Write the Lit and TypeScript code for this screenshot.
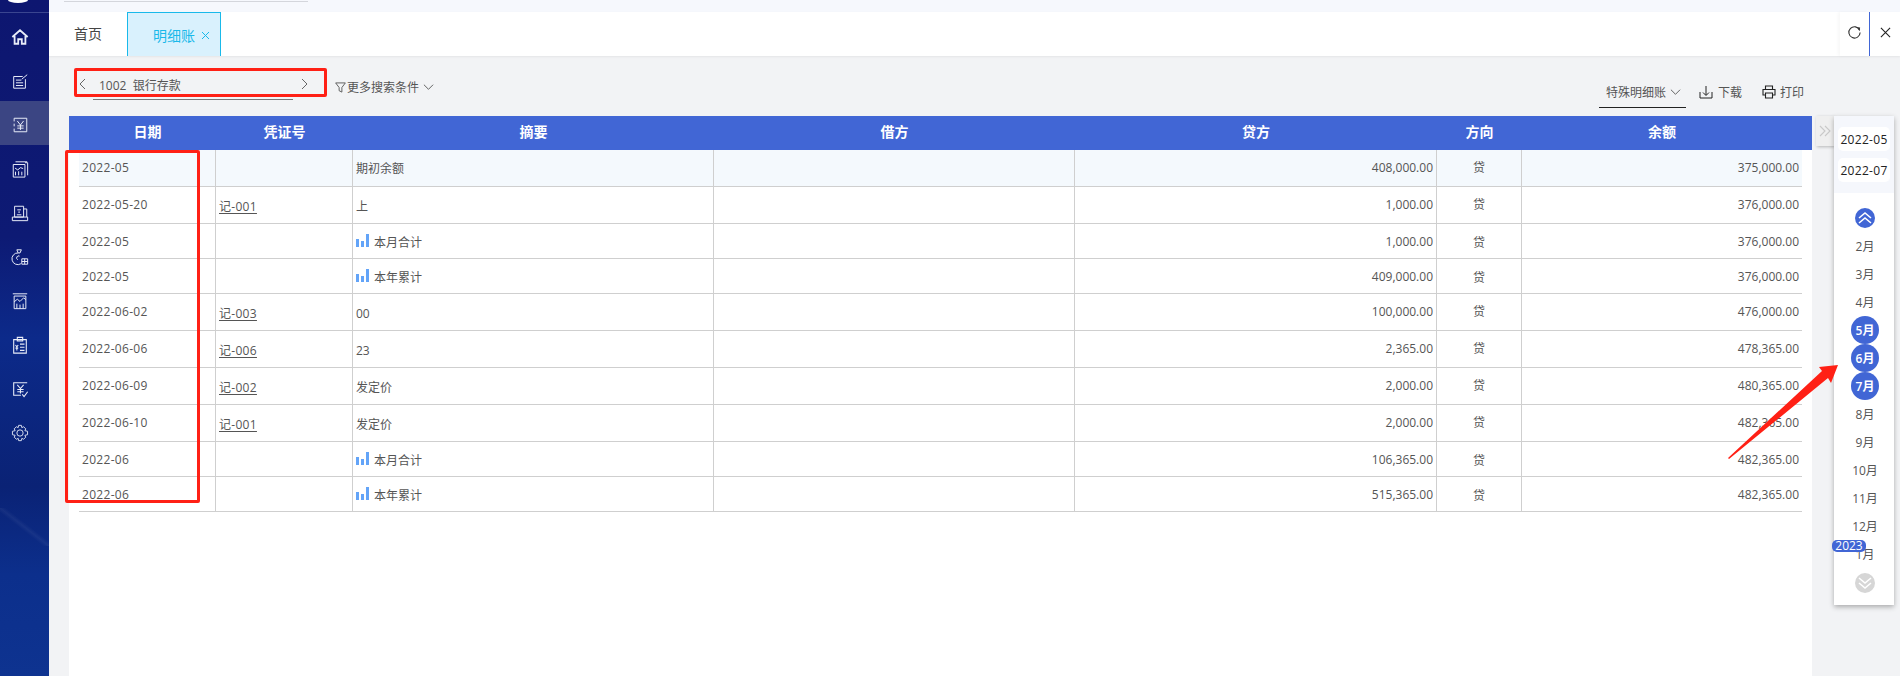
import { LitElement, html, css, svg } from "lit";
import { customElement } from "lit/decorators.js";

type Row = { h: number; d: string; v?: string; s: string; c: string; b: string; chart?: boolean };
const rows: Row[] = [
  { h: 37, d: "2022-05", s: "期初余额", c: "408,000.00", b: "375,000.00" },
  { h: 37, d: "2022-05-20", v: "记-001", s: "上", c: "1,000.00", b: "376,000.00" },
  { h: 35, d: "2022-05", s: "本月合计", chart: true, c: "1,000.00", b: "376,000.00" },
  { h: 35, d: "2022-05", s: "本年累计", chart: true, c: "409,000.00", b: "376,000.00" },
  { h: 37, d: "2022-06-02", v: "记-003", s: "00", c: "100,000.00", b: "476,000.00" },
  { h: 37, d: "2022-06-06", v: "记-006", s: "23", c: "2,365.00", b: "478,365.00" },
  { h: 37, d: "2022-06-09", v: "记-002", s: "发定价", c: "2,000.00", b: "480,365.00" },
  { h: 37, d: "2022-06-10", v: "记-001", s: "发定价", c: "2,000.00", b: "482,365.00" },
  { h: 35, d: "2022-06", s: "本月合计", chart: true, c: "106,365.00", b: "482,365.00" },
  { h: 35, d: "2022-06", s: "本年累计", chart: true, c: "515,365.00", b: "482,365.00" },
];

const icons = [
  svg`<path d="M1.500 10 10 2.500l8.500 7.500M4 9v8.500h4v-5h4v5h4V9" stroke-width="2"/>`,
  svg`<path d="M16 8v10H3V5h10M5.500 9h6M5.500 12h8M5.500 15h8M12 8l6-5" stroke-width="1.100"/>`,
  svg`<path d="M3.500 6V2.500h14v15h-14V14M3.500 8.500v3M7 5.500l3.500 4.500 3.500-4.500M10.500 10v5.500M7 11h7M7 13.500h7" stroke-width="1.100"/>`,
  svg`<path d="M2.500 5h13v14h-13zM15.500 3h3v14M5 2h13M4.500 9l3 2 3-2.500 3 1M5 13v4M8.500 12.500v4.500M12 13v4" stroke-width="1.100"/>`,
  svg`<path d="M4 2.500h10v12H4zM14 5.500h3.500v9M1.500 14.500h17v4h-17zM7 6.500h4M8 9h2M6.500 12h5" stroke-width="1.100"/>`,
  svg`<path d="M6.500 2h5l-1.500 3.500H8zM8 5.500a6.500 6.500 0 1 0 3 12M9.500 9a2 2 0 1 0-2 4M12 12h6.500v6H12zM15.200 12v6M12 15h6.500" stroke-width="1.100"/>`,
  svg`<path d="M2 2h16M3.500 4.500h13v14h-13zM3.500 11l3.500-3 3 2.500 4-4 2.500 2M6.500 13v5.500M10 14v4.500M13.500 13v5.500" stroke-width="1.100"/>`,
  svg`<path d="M3 4h14v15H3zM7 1.500h6V5.500H7zM10 9h5M10 12.500h5M10 16h5M5 10l1.500 2 1.500-2M6.500 12v4M5 13.500h3" stroke-width="1.200"/>`,
  svg`<path d="M18 3H3v14h8M7 5.500l3.500 4 3.500-4M10.500 9.500v5.500M7 10.500h7M7 13h7M12.500 16l2 2.500 4-5.500" stroke-width="1.200"/>`,
  svg`<path d="M8.500 1.500h3l.5 2.500 2-.9 2.400 2.200-1 2.100 3 .7v3.800l-3 .7 1 2.100-2.400 2.200-2-.9-.5 2.500h-3l-.5-2.500-2 .9-2.400-2.200 1-2.100-3-.7V8.100l3-.7-1-2.100L6 3.100l2 .9zM10 6.500a3.500 3.500 0 1 0 0 7 3.500 3.500 0 0 0 0-7z" stroke-width="1"/>`,
];

const dbl = (up: boolean) => html`<svg viewBox="0 0 20 20" width="20" height="20" fill="none" stroke="#fff" stroke-width="1.600">
  ${up ? svg`<path d="M4 10l6-5 6 5M4 15l6-5 6 5"/>` : svg`<path d="M4 5l6 5 6-5M4 10l6 5 6-5"/>`}
</svg>`;

const chev = html`<svg class="chev" viewBox="0 0 12 8" width="11" height="8" fill="none" stroke="#555" stroke-width="1"><path d="M1 1.500l5 5 5-5"/></svg>`;

@customElement("app-root")
export class AppRoot extends LitElement {
  static styles = css`
    :host { display: block; width: 1900px; height: 676px; overflow: hidden; position: relative; font-family: "Open Sans", "Noto Sans CJK SC", sans-serif; font-size: 12px; color: #555; }
    * { box-sizing: border-box; }
    .page { display: flex; height: 676px; }
    .side { width: 49px; flex: none; background-color: #0d1670;
      background-image:
        linear-gradient(to top right, transparent 44%, rgba(255,255,255,.05) 50%, transparent 56%),
        linear-gradient(180deg, #0d1670 0%, #0d1a74 35%, #0c2a8a 50%, #0a2275 72%, #0c2f8c 85%, #0e3390 100%);
      background-size: 49px 38px, 100% 100%;
      background-position: 0 508px, 0 0;
      background-repeat: no-repeat; }
    .logo { height: 13px; border-bottom: 1px solid #3a4590; }
    .logo i { display: block; width: 20px; height: 3px; margin-left: 8px; background: #fff; border-radius: 0 0 10px 10px / 0 0 3px 3px; }
    .nav { display: flex; flex-direction: column; }
    .nav div { height: 44px; display: flex; align-items: center; justify-content: center; padding: 3px 10px 0 0; }
    .nav div.on { background: #3b4583; }
    .nav svg { width: 18px; height: 18px; fill: none; stroke: #e8ecf8; }
    .main { flex: 1; display: flex; flex-direction: column; min-width: 0; background: #f2f3f5; }
    .strip { height: 12px; background: #f6f8fd; flex: none; padding-top: 1px; }
    .strip i { display: block; width: 244px; margin-left: 15px; height: 1px; background: #d4d6dc; }
    .tabs { height: 44px; flex: none; background: #fff; display: flex; box-shadow: 0 1px 2px rgba(0,0,0,.06); position: relative; }
    .tab0 { width: 78px; padding-left: 25px; font-size: 14px; line-height: 44px; color: #444; }
    .tab1 { width: 94px; background: #d9f1fd; border: 1px solid #19b9ea; border-bottom: none; color: #19b9ea; font-size: 14px; padding-left: 25px; display: flex; gap: 6px; align-items: center; }
    .tab1 svg { width: 9px; height: 9px; stroke: #19b9ea; fill: none; margin-top: 2px; }
    .tabs .sp { flex: 1; }
    .tool { width: 30px; display: flex; align-items: center; justify-content: center; padding-bottom: 3px; }
    .tool.sep { border-right: 1px solid #4166d5; box-shadow: -2px 0 3px rgba(0,0,0,.03); }
    .toolbar { height: 60px; flex: none; display: flex; align-items: flex-start; padding-left: 26px; }
    .picker { width: 253px; height: 25px; margin-top: 15px; display: flex; align-items: center; justify-content: space-between; position: relative; padding: 0 19px 0 3px; color: #555; }
    .picker b { font-weight: 400; position: absolute; left: 24px; top: 5px; white-space: pre; }
    .picker::after { content: ""; position: absolute; left: 18px; top: 28px; width: 200px; height: 1px; background: #777; }
    .more { margin-left: 7px; margin-top: 22px; display: flex; align-items: center; font-size: 12px; color: #555; }
    .more .chev { margin-left: 4px; }
    .more svg:first-child { margin-right: 1px; }
    .grow { flex: 1; }
    .right { display: flex; margin-right: 96px; align-items: flex-start; padding-top: 12px; color: #555; }
    .special { width: 87px; height: 40px; border-bottom: 1px solid #222; display: flex; align-items: center; justify-content: center; gap: 4px; padding: 8px 0 0 2px; }
    .act { display: flex; align-items: center; gap: 5px; margin: 7px 0 0 13px; height: 34px; }
    .act.print { margin-left: 20px; gap: 4px; }
    .body { flex: 1; display: flex; min-height: 0; }
    .sheet { width: 1743px; margin-left: 20px; background: #fff; flex: none; }
    .head { height: 34px; padding-left: 10px; background: #4166d5; color: #fff; font-weight: 700; font-size: 14px; display: grid; grid-template-columns: 137px 137px 361px 361px 362px 85px 280px; text-align: center; line-height: 32px; }
    .rows { margin-left: 10px; width: 1723px; }
    .row { display: grid; grid-template-columns: 137px 137px 361px 361px 362px 85px 280px; border-bottom: 1px solid #cfcfcf; color: #555; font-size: 12px; }
    .row.first { background: #f4f9fd; }
    .cell { border-right: 1px solid #cfcfcf; padding: 0 3px; display: flex; align-items: center; min-width: 0; }
    .cell:last-child { border-right: none; }
    .cell.d { letter-spacing: .3px; }
    .cell.n { justify-content: flex-end; }
    .cell.t { justify-content: center; }
    .tall .d, .tall .n, .tall .t { padding-bottom: 2px; }
    .tall .x { padding-top: 2px; }
    .short .d, .short .n, .short .t { padding-top: 1px; }
    .short .x { padding-top: 2px; }
    .first .x { padding-top: 0; }
    .cell u { text-underline-offset: 2px; letter-spacing: .3px; }
    .bars { width: 13px; height: 13px; margin: -3px 5px 0 0; flex: none; }
    .rail { width: 88px; flex: none; display: flex; align-items: flex-start; }
    .toggle { width: 18px; height: 30px; margin-left: 4px; background: #efefef; box-shadow: 1px 1px 3px rgba(0,0,0,.25); display: flex; align-items: center; justify-content: center; }
    .panel { width: 60px; height: 489px; background: #fff; box-shadow: 0 2px 5px rgba(0,0,0,.3); position: relative; display: flex; flex-direction: column; align-items: center; }
    .dates { width: 100%; height: 77px; background: #f5f7fc; padding: 11px 4px 0; display: flex; flex-direction: column; gap: 7px; flex: none; }
    .dates div { height: 24px; background: #fff; border-radius: 5px; display: flex; align-items: center; justify-content: center; color: #222; font-size: 12px; letter-spacing: .3px; }
    .round { width: 20px; height: 20px; border-radius: 50%; background: #4166d5; margin-top: 15px; margin-left: 2px; flex: none; display: flex; }
    .round.off { background: #d6d6d6; margin-top: 5px; }
    .months { display: flex; flex-direction: column; align-items: center; margin-top: 4px; margin-left: 2px; }
    .m { width: 28px; height: 28px; border-radius: 50%; display: flex; align-items: center; justify-content: center; color: #555; font-size: 12px; }
    .m.on { background: #4166d5; color: #fff; font-weight: 600; }
    .year { position: absolute; left: -2px; top: 424px; width: 34px; height: 12px; border-radius: 5px; background: #4166d5; color: #fff; font-size: 12px; line-height: 12px; text-align: center; }
    .red { position: absolute; border: 3px solid #ff2015; border-radius: 2px; pointer-events: none; }
    .arrow { position: absolute; left: 1700px; top: 350px; pointer-events: none; }
  `;

  render() {
    return html`
      <div class="page">
        <aside class="side">
          <div class="logo"><i></i></div>
          <nav class="nav">
            ${icons.map((p, i) => html`<div class=${i === 2 ? "on" : ""}><svg viewBox="0 0 20 20">${p}</svg></div>`)}
          </nav>
        </aside>
        <main class="main">
          <div class="strip"><i></i></div>
          <div class="tabs">
            <div class="tab0">首页</div>
            <div class="tab1">明细账<svg viewBox="0 0 9 9"><path d="M1 1l7 7M8 1L1 8"/></svg></div>
            <div class="sp"></div>
            <div class="tool sep"><svg viewBox="0 0 16 16" width="15" height="15" fill="none" stroke="#333" stroke-width="1.200"><path d="M13.500 5.500A6 6 0 1 0 14 8"/><path d="M10.500 2.500l3.500 .2-.6 3.600z" fill="#333" stroke="none"/></svg></div>
            <div class="tool"><svg viewBox="0 0 12 12" width="11" height="11" fill="none" stroke="#222" stroke-width="1.200"><path d="M1 1l10 10M11 1L1 11"/></svg></div>
          </div>
          <div class="toolbar">
            <div class="picker">
              <svg viewBox="0 0 8 12" width="8" height="12" fill="none" stroke="#666"><path d="M7 1L2 6l5 5"/></svg>
              <b>1002  银行存款</b>
              <svg viewBox="0 0 8 12" width="8" height="12" fill="none" stroke="#666"><path d="M1 1l5 5-5 5"/></svg>
            </div>
            <div class="more">
              <svg viewBox="0 0 12 12" width="11" height="11" fill="none" stroke="#555"><path d="M.700 1h10.600L7.500 6v5L4.500 9.500V6z"/></svg>
              更多搜索条件 ${chev}
            </div>
            <div class="grow"></div>
            <div class="right">
              <div class="special">特殊明细账 ${chev}</div>
              <div class="act"><svg viewBox="0 0 14 14" width="14" height="14" fill="none" stroke="#222"><path d="M1 7v6h12V7M7 1v9M4 7.500l3 3 3-3"/></svg><span>下载</span></div>
              <div class="act print"><svg viewBox="0 0 14 14" width="14" height="14" fill="none" stroke="#222" stroke-width="1.100"><path d="M3.500 4V1h7v3M3 10H1V4.500h12V10h-2M3.500 8h7v5h-7z"/></svg><span>打印</span></div>
            </div>
          </div>
          <div class="body">
            <section class="sheet">
              <div class="head"><span>日期</span><span>凭证号</span><span>摘要</span><span>借方</span><span>贷方</span><span>方向</span><span>余额</span></div>
              <div class="rows">
                ${rows.map((r, i) => html`
                  <div class="row ${i === 0 ? "first" : ""} ${r.h === 37 ? "tall" : "short"}" style="height:${r.h}px">
                    <div class="cell d">${r.d}</div>
                    <div class="cell x">${r.v ? html`<u>${r.v}</u>` : ""}</div>
                    <div class="cell x">
                      ${r.chart ? html`<svg class="bars" viewBox="0 0 13 13" fill="#63a4f8"><path d="M0 5h3v8H0zM5 7h3v6H5zM10 0h3v13h-3z"/></svg>` : ""}${r.s}
                    </div>
                    <div class="cell"></div>
                    <div class="cell n">${r.c}</div>
                    <div class="cell t">贷</div>
                    <div class="cell n">${r.b}</div>
                  </div>`)}
              </div>
            </section>
            <div class="rail">
              <div class="toggle"><svg viewBox="0 0 12 12" width="12" height="12" fill="none" stroke="#c9c9c9" stroke-width="1.100"><path d="M1 1l5 5-5 5M6 1l5 5-5 5"/></svg></div>
              <div class="panel">
                <div class="dates"><div>2022-05</div><div>2022-07</div></div>
                <div class="round">${dbl(true)}</div>
                <div class="months">
                  ${["2月","3月","4月","5月","6月","7月","8月","9月","10月","11月","12月","1月"].map((m, i) => html`<div class="m ${i >= 3 && i <= 5 ? "on" : ""}">${m}</div>`)}
                </div>
                <div class="round off">${dbl(false)}</div>
                <div class="year">2023</div>
              </div>
            </div>
          </div>
        </main>
      </div>
      <div class="red" style="left:74px;top:68px;width:253px;height:29px"></div>
      <div class="red" style="left:65px;top:150px;width:135px;height:353px"></div>
      <svg class="arrow" width="140" height="130" viewBox="0 0 140 130"><path d="M28 108L122 21 119 17 138 15 131 33 128 28 29 109z" fill="#ff2015"/></svg>
    `;
  }
}
